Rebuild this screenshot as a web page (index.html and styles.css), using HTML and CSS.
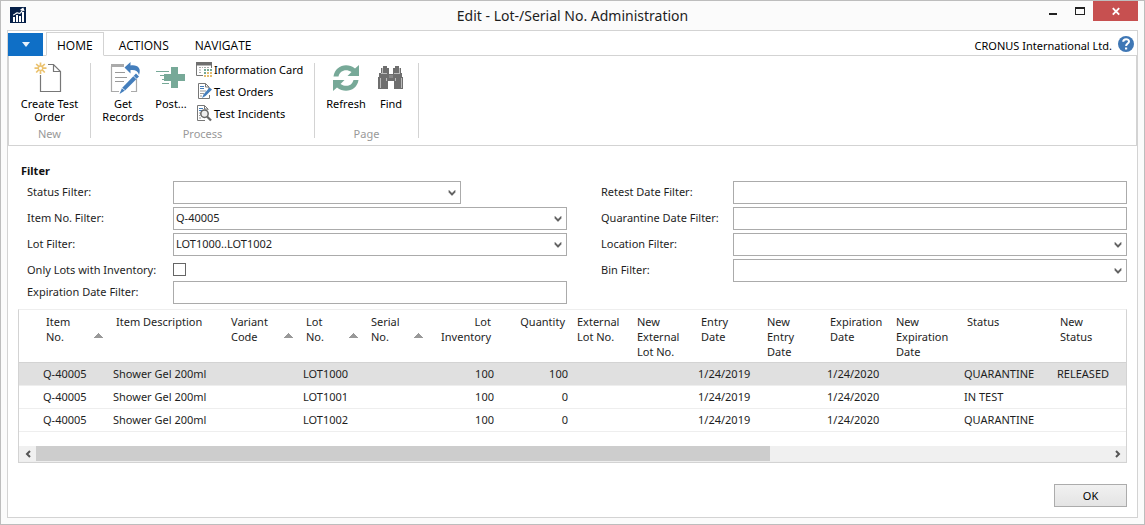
FILE: index.html
```html
<!DOCTYPE html>
<html lang="en">
<head>
<meta charset="utf-8">
<title>Edit - Lot-/Serial No. Administration</title>
<link rel="stylesheet" href="styles.css">
</head>
<body>
<svg class="defs" aria-hidden="true">
  <symbol id="chevron" viewBox="0 0 8 6"><path d="M1 .5L4 3.5L7 .5V2.3L4 5.4L1 2.3Z" fill="#555" stroke="#555" stroke-width=".7"/></symbol>
</svg>
<div class="window">
  <header class="titlebar">
    <svg class="app-icon" viewBox="0 0 16 16" aria-hidden="true"><rect width="16" height="16" fill="#062048"/><path d="M3 10h2v5H3zM6 8h2v7H6zM9 9h2v6H9zM12 5h2v10h-2z" fill="#fff"/><path d="M3 8C5 8 6 5 8 6S11 6 13 2M10.500 3L13 1.500L14 4" fill="none" stroke="#fff" stroke-width="1.200"/></svg>
    <h1 class="title">Edit - Lot-/Serial No. Administration</h1>
    <div class="controls">
      <button class="control" aria-label="Minimize"><svg width="8" height="20" viewBox="0 0 8 20"><path d="M0 12h8v2H0z" fill="#222"/></svg></button>
      <button class="control" aria-label="Maximize"><svg width="10" height="20" viewBox="0 0 10 20"><path d="M0 6h10v8H0zM1 8v5h8V8z" fill="#222" fill-rule="evenodd"/></svg></button>
      <button class="control close" aria-label="Close"><svg width="8" height="20" viewBox="0 0 8 20"><path d="M.8 7.200L7.200 13.600M7.200 7.200L.8 13.600" stroke="#fff" stroke-width="1.900"/></svg></button>
    </div>
  </header>
  <main class="panel">
    <nav class="tabs">
      <button class="file" aria-label="Application menu"><svg width="8" height="5" viewBox="0 0 8 5"><path d="M0 0h8L4 5z" fill="#e8f2fb"/></svg></button>
      <button class="tab active">HOME</button>
      <button class="tab">ACTIONS</button>
      <button class="tab">NAVIGATE</button>
      <span class="company">CRONUS International Ltd.</span>
      <button class="help" aria-label="Help"><svg width="16" height="16" viewBox="0 0 16 16"><circle cx="8" cy="8" r="8" fill="#3f77b5"/><path d="M5.200 5.700C5.300 2.400 11 2.300 11 5.500C11 7.500 8.100 7.600 8.100 10" fill="none" stroke="#fff" stroke-width="2"/><path d="M7 11.500h2.200v2H7z" fill="#fff"/></svg></button>
    </nav>
    <div class="ribbon">
      <section class="group group-new">
        <div class="actions">
          <button class="big create"><svg width="32" height="32" viewBox="0 0 32 32"><path d="M14 1.500H19.500L26.500 8.500V28.500H6.500V12M19.500 1.500V8.500H26.500" fill="none" stroke="#777" stroke-width="1.200"/><path d="M6.500 -.5V3M6.500 7.500V11M.5 5.200H4M9 5.200H12.500M2.200 1L5 3.700M8 6.700L10.800 9.500M10.800 1L8 3.700M5 6.700L2.200 9.500" stroke="#ebc26f" stroke-width="1.700" fill="none"/><circle cx="6.500" cy="5.200" r="2.200" fill="#fff" stroke="#ebc26f" stroke-width="1.300"/></svg>Create Test<br>Order</button>
        </div>
        <h2 class="group-name">New</h2>
      </section>
      <section class="group group-process">
        <div class="actions">
          <button class="big records"><svg width="32" height="32" viewBox="0 0 32 32"><path d="M4.500 3V28.500H12M24 28.500H29.500V16" fill="none" stroke="#aaa" stroke-width="1.200"/><path d="M4 1H17V4H4z" fill="#aaa"/><path d="M8 9.500H18M8 14.500H20M8 18.500H17" stroke="#999"/><path d="M17.500 4.500L23.500 -1V2.500C31 1.500 34.500 5.500 32 12C31 8 28.500 6.500 23.500 7V10.500Z" fill="#447ebc"/><path d="M29 10.500L32 13.500L18 27.500L12.500 31L15 25Z" fill="#447ebc"/><path d="M26.500 13L29.500 16M15 25L18 27.500" stroke="#fff" stroke-width=".8"/></svg>Get<br>Records</button>
          <button class="big post"><svg width="32" height="32" viewBox="0 0 32 32"><path d="M16 4h7v7h7v7h-7v7h-7v-7H9v-7h7z" fill="#77a998"/><path d="M1 8.500H14M5 12.500H9M7 16.500H9M7 20.500H14" stroke="#77a998"/></svg>Post...</button>
          <div class="stack">
            <button class="small"><svg width="16" height="16" viewBox="0 0 16 16"><path d="M.5 2V14.500H7M15.500 2V7" fill="none" stroke="#777"/><path d="M0 1h16v3.500H0z" fill="#6f6f6f"/><path d="M3 6.500h4M8 6.500h5M3 9h3M3 11.500h3" stroke="#aaa" stroke-dasharray="2 1"/><path d="M8 8h2v2H8zM11 8h2v2h-2zM14 8h2v2h-2zM8 11h2v2H8z" fill="#76a895"/><path d="M11 11h2v2h-2zM14 11h2v2h-2zM8 14h2v2H8zM11 14h2v2h-2zM14 14h2v2h-2z" fill="#e3bd70"/></svg>Information Card</button>
            <button class="small"><svg width="16" height="16" viewBox="0 0 16 16"><path d="M2.500 .5H9.500L13 4V7M2.500 .5V15.500H13.500V12M9.500 .5V4H13" fill="none" stroke="#777"/><path d="M4 3.500h4M4 5.500h4" stroke="#447ebc"/><path d="M4 8h6M4 10.500h4M4 13h2" stroke="#999"/><path d="M13.500 4.500L16 6.500L9.500 13L6 15L7.500 11.500Z" fill="#447ebc"/></svg>Test Orders</button>
            <button class="small"><svg width="16" height="16" viewBox="0 0 16 16"><path d="M1.500 .5H8.500L12 4V5M1.500 .5V15.500H9M8.500 .5V4H12" fill="none" stroke="#777"/><path d="M3 3.500h4M3 5.500h3" stroke="#447ebc"/><path d="M3 8h1M3 10.500h1M3 13h2" stroke="#999"/><circle cx="8.500" cy="8.700" r="3.700" fill="#eee" stroke="#666" stroke-width="1.500"/><path d="M11 11.500L15 15.500" stroke="#666" stroke-width="2.300"/></svg>Test Incidents</button>
          </div>
        </div>
        <h2 class="group-name">Process</h2>
      </section>
      <section class="group group-page">
        <div class="actions">
          <button class="big refresh"><svg width="32" height="32" viewBox="0 0 32 32"><path d="M3.500 13.500C5 2.500 17 -1 25 5.500L29 2V13H17.500L21.500 9C16 5.500 10 7.500 8.500 13.500Z" fill="#77a998"/><path d="M28.500 17C27 27.500 15 31 7 24.500L3 28V17H14.500L10.500 21C16 24.500 22 23 23.500 17Z" fill="#77a998"/></svg>Refresh</button>
          <button class="big find"><svg width="32" height="32" viewBox="0 0 32 32"><path d="M8 3h4v2h2v6h4V5h2V3h4v2h2v5h1v4h1v12H19v-8h-6v8H3V14h1v-4h2V5h2z" fill="#6e6e6e"/><path d="M7.500 5v5M24.500 5v5M6 10.500h6M19 10.500h6M5.500 15v10M26.500 15v10M11.500 15v3M20.500 15v3" stroke="#ddd" stroke-width=".7" fill="none"/><path d="M14 12h4v3h-4z" fill="#888"/></svg>Find</button>
        </div>
        <h2 class="group-name">Page</h2>
      </section>
    </div>
    <div class="content">
      <h2 class="section-title">Filter</h2>
      <form class="filters">
        <div class="fields fields-left">
          <label for="status">Status Filter:</label>
          <div class="combo short"><select id="status"><option></option></select><svg class="chevron"><use href="#chevron"/></svg></div>
          <label for="item">Item No. Filter:</label>
          <div class="combo"><select id="item"><option>Q-40005</option></select><svg class="chevron"><use href="#chevron"/></svg></div>
          <label for="lot">Lot Filter:</label>
          <div class="combo"><select id="lot"><option>LOT1000..LOT1002</option></select><svg class="chevron"><use href="#chevron"/></svg></div>
          <label for="inventory">Only Lots with Inventory:</label>
          <input class="check" type="checkbox" id="inventory">
          <label for="expiration">Expiration Date Filter:</label>
          <input class="text" type="text" id="expiration">
        </div>
        <div class="fields fields-right">
          <label for="retest">Retest Date Filter:</label>
          <input class="text" type="text" id="retest">
          <label for="quarantine">Quarantine Date Filter:</label>
          <input class="text" type="text" id="quarantine">
          <label for="location">Location Filter:</label>
          <div class="combo"><select id="location"><option></option></select><svg class="chevron"><use href="#chevron"/></svg></div>
          <label for="bin">Bin Filter:</label>
          <div class="combo"><select id="bin"><option></option></select><svg class="chevron"><use href="#chevron"/></svg></div>
        </div>
      </form>
      <div class="grid">
        <table class="lots">
          <colgroup>
            <col class="w-mark"><col class="w-item"><col class="w-desc"><col class="w-variant"><col class="w-lot"><col class="w-serial"><col class="w-inventory"><col class="w-quantity"><col class="w-external"><col class="w-new-external"><col class="w-entry"><col class="w-new-entry"><col class="w-expiration"><col class="w-new-expiration"><col class="w-status"><col class="w-new-status">
          </colgroup>
          <thead>
            <tr>
              <td></td>
              <th class="sorted">Item<br>No.</th>
              <th>Item Description</th>
              <th class="sorted">Variant<br>Code</th>
              <th class="sorted">Lot<br>No.</th>
              <th class="sorted">Serial<br>No.</th>
              <th class="num">Lot<br>Inventory</th>
              <th class="num">Quantity</th>
              <th>External<br>Lot No.</th>
              <th>New<br>External<br>Lot No.</th>
              <th>Entry<br>Date</th>
              <th>New<br>Entry<br>Date</th>
              <th>Expiration<br>Date</th>
              <th>New<br>Expiration<br>Date</th>
              <th>Status</th>
              <th>New<br>Status</th>
            </tr>
          </thead>
          <tbody>
            <tr class="selected"><td></td><td>Q-40005</td><td>Shower Gel 200ml</td><td></td><td>LOT1000</td><td></td><td class="num">100</td><td class="num">100</td><td></td><td></td><td>1/24/2019</td><td></td><td>1/24/2020</td><td></td><td>QUARANTINE</td><td>RELEASED</td></tr>
            <tr><td></td><td>Q-40005</td><td>Shower Gel 200ml</td><td></td><td>LOT1001</td><td></td><td class="num">100</td><td class="num">0</td><td></td><td></td><td>1/24/2019</td><td></td><td>1/24/2020</td><td></td><td>IN TEST</td><td></td></tr>
            <tr><td></td><td>Q-40005</td><td>Shower Gel 200ml</td><td></td><td>LOT1002</td><td></td><td class="num">100</td><td class="num">0</td><td></td><td></td><td>1/24/2019</td><td></td><td>1/24/2020</td><td></td><td>QUARANTINE</td><td></td></tr>
          </tbody>
        </table>
        <div class="scrollbar">
          <button class="scroll-button" aria-label="Scroll left"><svg width="6" height="8" viewBox="0 0 6 8"><path d="M5 1L2 4L5 7" fill="none" stroke="#555" stroke-width="2"/></svg></button>
          <div class="track"><div class="thumb" style="width: 68.4%"></div></div>
          <button class="scroll-button" aria-label="Scroll right"><svg width="6" height="8" viewBox="0 0 6 8"><path d="M1 1L4 4L1 7" fill="none" stroke="#555" stroke-width="2"/></svg></button>
        </div>
      </div>
      <footer class="footer"><button class="ok">OK</button></footer>
    </div>
  </main>
</div>
</body>
</html>
```
FILE: styles.css
```css
* { box-sizing: border-box; }
body {
  margin: 0;
  font-family: "Noto Sans", "Open Sans", sans-serif;
  font-size: 11px;
  line-height: 15px;
  color: #1e1e1e;
}
button, select, input { margin: 0; padding: 0; font: inherit; color: inherit; }
button { border: 0; background: none; }
h1, h2 { margin: 0; font-size: inherit; font-weight: normal; }
svg { display: block; flex: none; overflow: visible; }
.defs { display: none; }

.window {
  display: flex;
  flex-direction: column;
  min-height: 100vh;
  padding: 0 6px 6px;
  border: 1px solid #bdbdbd;
  background: #fbfbfb;
}
.titlebar {
  display: grid;
  grid-template-columns: 1fr auto 1fr;
  height: 29px;
}
.app-icon { width: 16px; height: 16px; margin: 6px 0 0 3px; }
.title { font-size: 14px; line-height: 30px; }
.controls { display: flex; justify-content: flex-end; align-items: flex-start; }
.control { display: flex; justify-content: center; width: 27px; height: 20px; }
.close { width: 45px; background: #c75050; }

.panel {
  display: flex;
  flex-direction: column;
  flex: 1;
  border: 1px solid #d3d3d3;
  background: #fff;
}
.tabs {
  display: flex;
  align-items: center;
  height: 25px;
  padding-top: 1px;
  box-shadow: inset 0 -1px #d3d3d3;
  color: #000;
}
.file {
  display: flex;
  align-items: center;
  justify-content: center;
  width: 35px;
  height: 23px;
  margin-right: 3px;
  background: #0f6fc6;
}
.tab { height: 24px; padding: 2px 13px 0; font-family: "Open Sans", sans-serif; font-size: 12px; }
.active {
  margin-right: 2px;
  padding: 2px 10px 0;
  border: 1px solid #d3d3d3;
  border-bottom-color: #fff;
  background: #fff;
}
.company { margin-left: auto; padding-top: 2px; }
.help { margin: 0 3px 0 6px; }

.ribbon {
  display: flex;
  height: 90px;
  padding: 7px 0;
  border: 1px solid #d3d3d3;
  border-top: 0;
  color: #000;
}
.group {
  display: flex;
  flex-direction: column;
  justify-content: space-between;
  border-right: 1px solid #d3d3d3;
}
.group-new { width: 82px; }
.group-process { width: 224px; }
.group-page { width: 104px; }
.actions { display: flex; }
.group-name { line-height: 8px; text-align: center; color: #999; }
.big {
  display: flex;
  flex-direction: column;
  align-items: center;
  line-height: 13px;
}
.big svg { margin-bottom: 2px; }
.create { width: 81px; }
.records { width: 52px; margin-left: 6px; }
.post { width: 44px; }
.refresh { width: 50px; margin-left: 6px; }
.find { width: 40px; }
.stack { margin: -5px 0 0 3px; }
.small { display: flex; align-items: center; gap: 2px; height: 22px; white-space: nowrap; }

.content { display: flex; flex-direction: column; flex: 1; padding: 17px 10px 10px; }
.section-title { padding-left: 3px; margin-bottom: 3px; font-weight: bold; color: #111; }
.filters { display: flex; gap: 34px; padding-left: 9px; }
.fields { display: grid; gap: 3px 0; }
.fields-left {
  flex: 540 1 0;
  grid-template-columns: 146px 1fr;
  grid-template-rows: 23px 23px 23px 19px 23px;
}
.fields-right {
  flex: 526 1 0;
  grid-template-columns: 132px 1fr;
  grid-template-rows: 23px 23px 23px 23px;
}
.fields label { line-height: 21px; white-space: nowrap; }
.combo { position: relative; }
.short { width: 73%; }
.combo select, .text {
  width: 100%;
  height: 23px;
  padding: 0 2px 2px;
  border: 1px solid #ababab;
  border-radius: 0;
  background: #fff;
  appearance: none;
}
.chevron { position: absolute; top: 9px; right: 5px; width: 8px; height: 6px; pointer-events: none; }
.check {
  width: 13px;
  height: 13px;
  margin-top: 4px;
  border: 1px solid #666;
  background: #fff;
  appearance: none;
}

.grid { margin-top: 5px; border: 1px solid #d3d3d3; border-top-color: #eee; }
.lots { width: 100%; table-layout: fixed; border-collapse: separate; border-spacing: 0; white-space: nowrap; }
.w-mark { width: 21px; }
.w-item { width: 70px; }
.w-desc { width: 115px; }
.w-variant { width: 75px; }
.w-lot, .w-serial { width: 65px; }
.w-inventory { width: 67px; }
.w-quantity { width: 74px; }
.w-external { width: 60px; }
.w-new-external { width: 64px; }
.w-entry { width: 66px; }
.w-new-entry { width: 63px; }
.w-expiration { width: 66px; }
.w-new-expiration { width: 71px; }
.w-status { width: 93px; }
.w-new-status { width: 72px; }
.lots th {
  height: 53px;
  padding: 4px 6px 3px;
  font-weight: normal;
  text-align: left;
  vertical-align: top;
}
.lots thead td, .lots th { border-bottom: 1px solid #d3d3d3; }
.sorted {
  background: conic-gradient(from 135deg at 50% 0, #999 90deg, transparent 0) right 7px top 23px / 9px 5px no-repeat;
}
.lots tbody td { height: 23px; padding: 0 3px 2px; border-bottom: 1px solid #eee; }
.lots .num { text-align: right; }
.selected { background: #e0e0e0; }
.scrollbar { display: flex; height: 16px; margin-top: 14px; border-bottom: 1px solid #eee; background: #f0f0f0; }
.scroll-button { display: flex; align-items: center; justify-content: center; width: 17px; }
.track { flex: 1; }
.thumb { height: 100%; background: #cdcdcd; }
.footer { display: flex; justify-content: flex-end; margin-top: auto; }
.ok {
  width: 73px;
  height: 23px;
  border: 1px solid #acacac;
  background: linear-gradient(#f1f1f1, #e4e4e4);
  color: #000;
}
```
